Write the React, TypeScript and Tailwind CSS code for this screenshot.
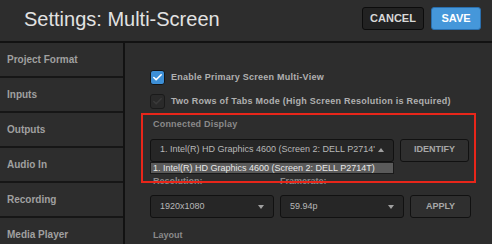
import { Check } from "lucide-react";

const sideItems = ["Project Format", "Inputs", "Outputs", "Audio In", "Recording", "Media Player"];

function Box({ checked }: { checked: boolean }) {
  return (
    <span
      className={`flex h-[15px] w-[15px] items-center justify-center rounded-[3px] border ${
        checked ? "border-[#141414] bg-[#3d8fd6]" : "border-[#1a1a1a] bg-[#2a2a2a]"
      }`}
    >
      <Check
        size={11}
        strokeWidth={3.5}
        className={checked ? "text-white" : "text-[#3a3a3a]"}
      />
    </span>
  );
}

function Caret({ up }: { up?: boolean }) {
  return (
    <span
      className={`h-0 w-0 border-x-[3.5px] border-x-transparent ${
        up ? "border-b-[4px] border-b-[#a0a0a0]" : "border-t-[4px] border-t-[#a0a0a0]"
      }`}
    />
  );
}

function Select({ value, up, className }: { value: string; up?: boolean; className: string }) {
  return (
    <div
      className={`flex h-[23px] items-center justify-between rounded-[3px] border border-[#111] bg-[#262626] pl-[9px] pr-[9px] text-[9px] text-[#b8b8b8] ${className}`}
    >
      <span className="whitespace-nowrap">{value}</span>
      <Caret up={up} />
    </div>
  );
}

function Btn({ label, className }: { label: string; className: string }) {
  return (
    <button
      className={`flex h-[23px] items-center justify-center rounded-[3px] border border-[#111] bg-[#2f2f2f] text-[9px] font-bold text-[#a8a8a8] ${className}`}
    >
      {label}
    </button>
  );
}

export default function App() {
  return (
    <div
      className="relative h-[244px] w-[492px] overflow-hidden bg-[#2d2d2d]"
      style={{ fontFamily: '"Liberation Sans", Arial, sans-serif' }}
    >
      <div className="flex h-[43px] items-center justify-between border-b-2 border-[#121212] pl-[24px] pr-[11px]">
        <h1 className="mb-[3px] text-[20px] leading-none text-[#e2e2e2]">Settings: Multi-Screen</h1>
        <div className="mb-[4px] flex gap-[7px]">
          <button className="h-[23px] w-[62px] rounded-[3px] border border-[#0c0c0c] bg-[#222] text-[11px] font-bold text-[#d8d8d8]">
            CANCEL
          </button>
          <button className="h-[23px] w-[50px] rounded-[3px] border border-[#2a6fae] bg-[#4597da] text-[11px] font-bold text-white">
            SAVE
          </button>
        </div>
      </div>

      <div className="flex">
        <div className="w-[125px] shrink-0 border-r-2 border-[#121212]">
          {sideItems.map((s) => (
            <div
              key={s}
              className="flex h-[35px] items-center border-b-2 border-[#161616] pl-[7px] text-[10px] font-bold text-[#a0a0a0]"
            >
              {s}
            </div>
          ))}
        </div>

        <div className="flex-1 pl-[25px] pt-[27px] text-[9px] font-bold text-[#b0b0b0]">
          <div className="flex items-center gap-[6px] tracking-[0.25px]">
            <Box checked />
            <span>Enable Primary Screen Multi-View</span>
          </div>
          <div className="mt-[9px] flex items-center gap-[6px] tracking-[0.25px]">
            <Box checked={false} />
            <span>Two Rows of Tabs Mode (High Screen Resolution is Required)</span>
          </div>

          <div className="mt-[9px] pl-[3px] tracking-[0.2px] text-[#8a8a8a]">Connected Display</div>
          <div className="relative mt-[7px] flex gap-[6px] font-normal">
            <Select
              up
              value="1. Intel(R) HD Graphics 4600 (Screen 2: DELL P2714'"
              className="w-[244px]"
            />
            <Btn label="IDENTIFY" className="w-[69px]" />
            <div className="absolute left-0 top-[23px] z-10 h-[12px] w-[244px] whitespace-nowrap border border-[#1a1a1a] bg-[#5a5a5a] pl-[2px] text-[9px] leading-[10px] text-[#e8e8e8]">
              1. Intel(R) HD Graphics 4600 (Screen 2: DELL P2714T)
            </div>
          </div>

          <div className="mt-[13px] flex text-[#8a8a8a]">
            <span className="w-[130px] pl-[3px]">Resolution:</span>
            <span>Framerate:</span>
          </div>
          <div className="mt-[7px] flex gap-[6px] font-normal">
            <Select value="1920x1080" className="w-[124px]" />
            <Select value="59.94p" className="w-[124px]" />
            <Btn label="APPLY" className="w-[61px]" />
          </div>
          <div className="mt-[11px] pl-[3px] text-[#8a8a8a]">Layout</div>
        </div>
      </div>

      <div className="absolute left-[141px] top-[113px] z-20 h-[70px] w-[335px] border-2 border-[#e8261a]" />
    </div>
  );
}
